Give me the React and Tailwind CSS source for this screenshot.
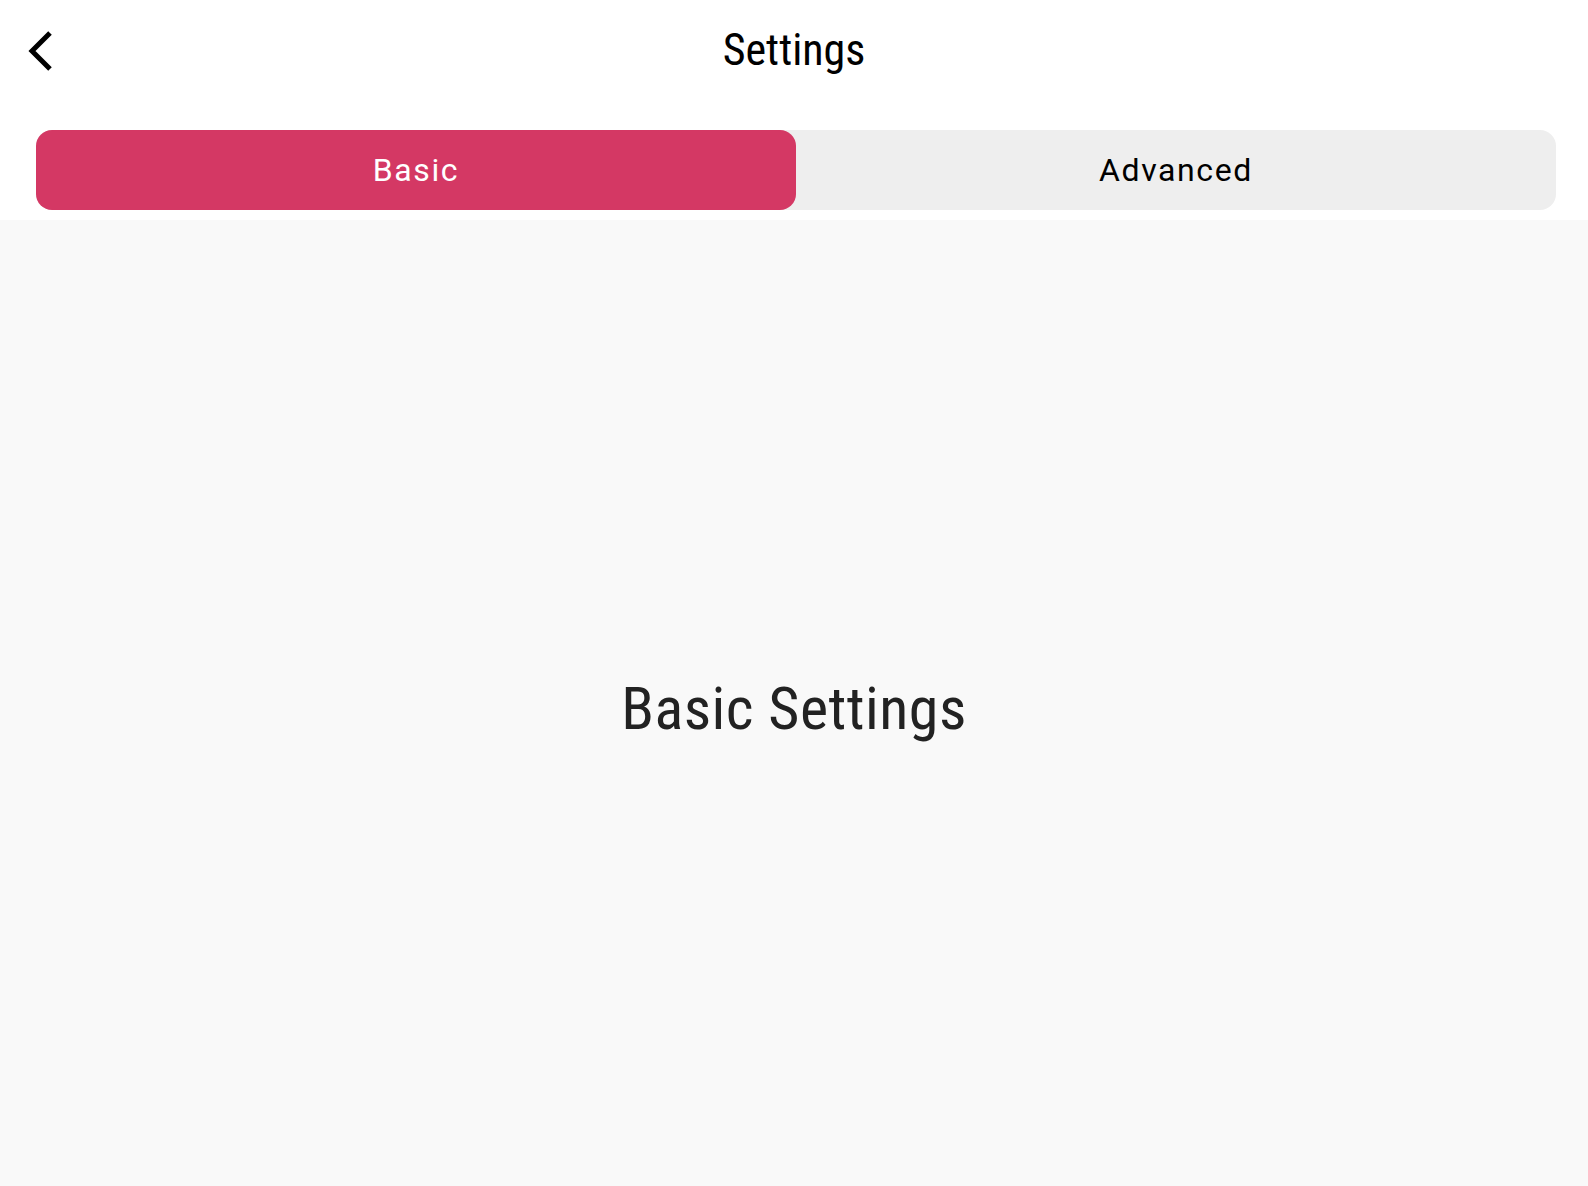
import React, { useState } from 'react';

const condensed = {
  fontFamily: "'Roboto Condensed', 'Liberation Sans Narrow', Roboto, sans-serif",
};

const Settings = () => {
  const [tab, setTab] = useState('basic');

  return (
    <section className="min-h-screen flex flex-col bg-white">
      {/* top bar */}
      <header className="relative h-[100px] flex items-center justify-center">
        <button type="button" className="absolute left-[26px] top-[30px] p-0">
          <svg width="28" height="42" viewBox="0 0 28 42" fill="none">
            <path d="M24 3 L6 21 L24 39" stroke="#000" strokeWidth="5" />
          </svg>
        </button>
        <h1
          className="text-[44px] leading-none text-black font-[450] [font-stretch:condensed]"
          style={condensed}
        >
          Settings
        </h1>
      </header>

      {/* tab switch */}
      <div className="pl-[36px] pr-[32px] pt-[30px] pb-[10px]">
        <div className="flex h-[80px] rounded-[16px] bg-[#eeeeee] font-['Roboto',sans-serif]">
          <button
            type="button"
            onClick={() => setTab('basic')}
            className={`flex-1 rounded-[16px] text-[32px] tracking-[1.6px] ${
              tab === 'basic' ? 'bg-[#d43864] text-white' : 'text-black'
            }`}
          >
            Basic
          </button>
          <button
            type="button"
            onClick={() => setTab('advanced')}
            className={`flex-1 rounded-[16px] text-[32px] tracking-[1.6px] ${
              tab === 'advanced' ? 'bg-[#d43864] text-white' : 'text-black'
            }`}
          >
            Advanced
          </button>
        </div>
      </div>

      {/* content */}
      <div className="flex-1 flex items-center justify-center bg-[#f9f9f9] min-h-[966px]">
        <p
          className="text-[60px] leading-none text-[#222222] font-[450] tracking-[0.5px] [font-stretch:condensed] mt-[12px]"
          style={condensed}
        >
          {tab === 'basic' ? 'Basic Settings' : 'Advanced Settings'}
        </p>
      </div>
    </section>
  );
};

export default function App() {
  return <Settings />;
}
